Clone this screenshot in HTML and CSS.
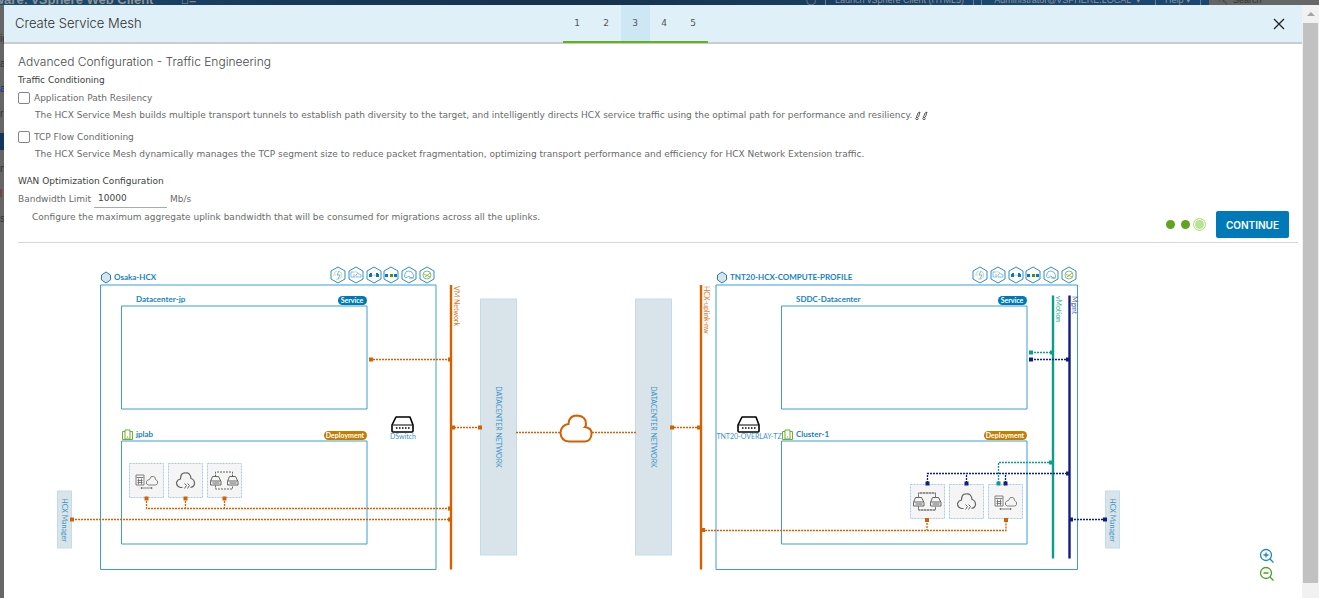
FILE: index.html
```html
<!DOCTYPE html>
<html lang="en">
<head>
<meta charset="utf-8">
<meta name="viewport" content="width=device-width, initial-scale=1">
<title>Create Service Mesh</title>
<link rel="stylesheet" href="styles.css">
</head>
<body>
<div class="backdrop" aria-hidden="true">
  <div class="topbar">
    <span class="brand">ware: vSphere Web Client</span>
    <span class="home">⌂≡</span>
    <span class="tool first">◯</span>
    <span class="tool">Launch vSphere Client (HTML5)</span>
    <span class="tool gap">Administrator@VSPHERE.LOCAL &nbsp;▾</span>
    <span class="tool">Help ▾</span>
    <span class="search">🔍︎ &nbsp;Search</span>
  </div>
  <div class="side"><i></i><span>ig</span><span>a</span><span class="dark">a</span><span>r</span><b></b><span>n</span><span class="red">l</span><span>s</span></div>
</div>

<div class="dialog" role="dialog" aria-labelledby="title">
  <div class="panel">
    <header class="head">
      <h1 id="title" class="title">Create Service Mesh</h1>
      <nav class="steps" aria-label="Steps">
        <button type="button">1</button>
        <button type="button">2</button>
        <button type="button" class="current" aria-current="step">3</button>
        <button type="button">4</button>
        <button type="button">5</button>
      </nav>
      <span class="fill"></span>
      <button type="button" class="close" aria-label="Close">
        <svg width="12" height="12" viewBox="0 0 12 12"><path d="M1 1l10 10M11 1L1 11" stroke="#222" stroke-width="1.3" fill="none"/></svg>
      </button>
    </header>

    <form class="form">
      <h2 class="heading">Advanced Configuration - Traffic Engineering</h2>
      <h3 class="sub">Traffic Conditioning</h3>
      <div class="option">
        <label class="check"><input type="checkbox">Application Path Resilency</label>
        <p class="note">The HCX Service Mesh builds multiple transport tunnels to establish path diversity to the target, and intelligently directs HCX service traffic using the optimal path for performance and resiliency.
          <svg class="paths" width="14" height="10" viewBox="0 0 14 10"><g fill="none" stroke="#333" stroke-width=".8"><path d="M1.500 6L3 2L5 1L3.500 6"/><circle cx="2" cy="7.500" r="1.200"/><path d="M8.500 6L10 2L12 1L10.500 6"/><circle cx="9" cy="7.500" r="1.200"/></g></svg></p>
      </div>
      <div class="option">
        <label class="check"><input type="checkbox">TCP Flow Conditioning</label>
        <p class="note">The HCX Service Mesh dynamically manages the TCP segment size to reduce packet fragmentation, optimizing transport performance and efficiency for HCX Network Extension traffic.</p>
      </div>
      <div class="wan">
        <div class="wan-fields">
          <h3 class="sub">WAN Optimization Configuration</h3>
          <div class="limit"><label for="bw">Bandwidth Limit</label><input id="bw" type="text" value="10000"><span>Mb/s</span></div>
          <p class="note wide">Configure the maximum aggregate uplink bandwidth that will be consumed for migrations across all the uplinks.</p>
        </div>
        <div class="actions">
          <span class="dot"></span><span class="dot"></span><span class="dot now"></span>
          <button type="submit" class="primary">CONTINUE</button>
        </div>
      </div>
    </form>

    <div class="canvas">
      <svg class="diagram" viewBox="4 243 1298 355" role="img" aria-label="Service mesh topology">
        <defs>
          <path id="hex" d="M0-8L7-4V4L0 8L-7 4V-4Z"/>
          <g id="services" fill="none" stroke-width="1">
            <g stroke="#2b8fc9" fill="#fff">
              <use href="#hex" x="0"/><use href="#hex" x="18"/><use href="#hex" x="36"/><use href="#hex" x="53"/><use href="#hex" x="71"/><use href="#hex" x="89"/>
            </g>
            <g stroke-width=".7">
              <path d="M-1-4A4 4 0 0 0-4-1M1-4A4 4 0 1 1-2 4M-5 0H-2" stroke="#a5cf70"/><path d="M1-4L-1 0H2L0 4" stroke="#3a9bd0"/>
              <path d="M17 2H13V-3H16M16-1V2M18 2H23Q24-1 21-1Q20-3 18 0Z" stroke="#5aaad6"/><path d="M16-3Q18-4 20-2" stroke="#a5cf70"/>
              <path d="M33 1Q36-1 39 1" stroke="#a5cf70"/>
              <path d="M68 3Q65 2 67-1Q67-4 71-4Q75-3 75-1Q77 3 73 3L71 1Z" stroke="#3a9bd0"/><path d="M71 3H76" stroke="#62a420"/>
              <circle cx="89" r="4" stroke="#62a420"/><path d="M86-1Q89 2 92-2M87 2Q89-1 92 2" stroke="#62a420"/>
            </g>
            <path d="M31-1h3v3h-3zM32-2h2v2h-2zM38-1h3v3h-3zM38-2h2v2h-2zM47-1h3v3h-3zM56-1h3v3h-3z" fill="#0a78b8"/><path d="M52-1h3v3h-3z" fill="#48960c"/>
          </g>
          <g id="switch" fill="none" stroke="#000">
            <path d="M4 1H18L21 9V15Q21 16 20 16H1Q0 16 0 15V9Z" stroke-width="1.600" stroke-linejoin="round"/>
            <path d="M1 9H20"/><path d="M4 12H18" stroke-width="1.600" stroke-dasharray="1.500 1.500"/>
          </g>
          <g id="host" fill="#fff" stroke="#72ad32">
            <path d="M.500 2.500H10.500V10.500H.500Z"/><path d="M3 1H8V10H3Z"/><path d="M5 8h1" stroke-width="1.200"/>
          </g>
          <rect id="tile" width="34" height="34" fill="#f5f5f5" stroke="#a9c9e8" stroke-dasharray="2 1"/>
          <g id="t-link">
            <use href="#tile"/>
            <g fill="none" stroke="#666" stroke-width=".8"><path d="M6.500 11.500h8v10h-8zM7 14h7M8 17h5M8 19h5M9 15v6M12 15v6"/><path d="M19 21.500Q16 21 17 18Q18 16 20 16Q21 12 24 13Q26 13 26 16Q29 17 28 20Q28 21 26 21.500Z"/><path d="M11 24.500H23M12 23.500v2M22 23.500v2"/></g>
          </g>
          <g id="t-cloud">
            <use href="#tile"/>
            <path d="M14 24H12Q8 23 8 19Q9 16 12 15.500Q12 9 17 9.500Q22 9 22.500 15Q26 16 26 20Q26 23 22 24" fill="none" stroke="#666" stroke-width="1.200"/>
            <path d="M16 20l2 2-2 3M19 20l2 2-2 3" fill="none" stroke="#666"/>
          </g>
          <g id="t-pair">
            <use href="#tile"/>
            <g fill="none" stroke="#555" stroke-width=".9">
              <path d="M8 13V8.500H25V13M8 22V25.500H25V22" stroke-dasharray="2 1"/>
              <path d="M5 13H11L13.500 18V21.500H3V18ZM3 17.500H13M5 19.500H12M22 13H28L30.500 18V21.500H20V18ZM20 17.500H30M22 19.500H29"/>
            </g>
          </g>
          <g id="t-pair-solid">
            <use href="#t-pair"/>
            <path d="M8 13V8.500H25V13M8 22V25.500H25V22" fill="none" stroke="#777" stroke-width=".8"/>
          </g>
        </defs>

        <g class="zone">
          <path d="M100.500 285H436V569.500H100.500ZM121.500 306H367V409H121.500ZM121.500 441H367V544H121.500Z"/>
          <path d="M716 285H1077.500V569.500H716ZM781.500 306H1027V409H781.500ZM781.500 441H1027V544H781.500Z"/>
        </g>
        <g class="block">
          <rect x="480.500" y="299" width="36" height="256"/><rect x="635.500" y="299" width="36" height="256"/>
          <rect x="57.500" y="491" width="14" height="57"/><rect x="1105.500" y="491" width="14" height="57"/>
        </g>

        <g class="profile">
          <path d="M106 272L110.500 275V280L106 283L101.500 280V275ZM722 272L726.500 275V280L722 283L717.500 280V275Z"/>
        </g>
        <g class="name">
          <text x="114" y="280">Osaka-HCX</text><text x="136" y="302">Datacenter-jp</text><text x="136" y="437">jplab</text>
          <text x="730" y="280">TNT20-HCX-COMPUTE-PROFILE</text><text x="796" y="302">SDDC-Datacenter</text><text x="796" y="437">Cluster-1</text>
        </g>
        <use href="#services" x="338" y="275"/><use href="#services" x="980" y="275"/>
        <use href="#host" x="122" y="429"/><use href="#host" x="782" y="429"/>
        <use href="#switch" x="392" y="416"/><use href="#switch" x="738" y="416"/>
        <g class="caption"><text x="403" y="439">DSwitch</text><text x="749" y="439">TNT20-OVERLAY-TZ</text></g>

        <g class="badge">
          <rect x="338" y="296" width="29" height="9" rx="4.500" fill="#0079b8"/><text x="352" y="303">Service</text>
          <rect x="998" y="296" width="29" height="9" rx="4.500" fill="#0079b8"/><text x="1012" y="303">Service</text>
          <rect x="324" y="431" width="43" height="9" rx="4.500" fill="#c47d00"/><text x="345" y="438">Deployment</text>
          <rect x="984" y="431" width="43" height="9" rx="4.500" fill="#c47d00"/><text x="1005" y="438">Deployment</text>
        </g>

        <use href="#t-link" x="129.500" y="463.500"/><use href="#t-cloud" x="168.500" y="463.500"/><use href="#t-pair" x="207.500" y="463.500"/>
        <use href="#t-pair-solid" x="910.500" y="484.500"/><use href="#t-cloud" x="949.500" y="484.500"/><use href="#t-link" x="988.500" y="484.500"/>

        <g class="net orange">
          <path class="bus" d="M451 285V569.500M701 285V569.500"/>
          <path class="wire" d="M370 359.500H450M451 427.500H480M516 432.500H560M592 432.500H636M671 427.500H700M72 519.500H450M146.500 498V508.500H450M185.500 498V508.500H450M224.500 498V508.500M702 530.500H1006V520M927 520V530"/>
          <path class="pin" d="M369 357.500h4v4h-4zM448 357.500h4v4h-4zM451 425.500h4v4h-4zM478 425.500h4v4h-4zM670 425.500h4v4h-4zM697 425.500h4v4h-4zM70 517.500h4v4h-4zM448 517.500h4v4h-4zM448 506.500h4v4h-4zM144.500 496.500h4v4h-4zM183.500 496.500h4v4h-4zM222.500 496.500h4v4h-4zM701 528h4v4h-4zM925 518h4v4h-4zM1004 518h4v4h-4z"/>
          <path class="cloud" d="M569 441.500Q561 441 560.500 433Q561 425 568.500 424Q569 415.500 577 415.500Q586 416 586 424Q586 426 585 427Q592 428 591.500 434Q591 441 585 441.500Z"/>
        </g>
        <g class="net teal">
          <path class="bus" d="M1053 295.500V558.500"/>
          <path class="wire" d="M1031 352.500H1051M998.500 483V462.500H1051"/>
          <path class="pin" d="M1029 350.500h4v4h-4zM1050 350.500h4v4h-4zM1049 460.500h4v4h-4zM996.500 481.500h4v4h-4z"/>
        </g>
        <g class="net navy">
          <path class="bus" d="M1069.500 295.500V558.500"/>
          <path class="wire" d="M1031 359.500H1068M927.500 483V473.500H1068M966.500 483V473M1005.500 483V473M1071 519.500H1105"/>
          <path class="pin" d="M1029 357.500h4v4h-4zM1066 357.500h4v4h-4zM1066 471.500h4v4h-4zM925.500 481.500h4v4h-4zM964.500 481.500h4v4h-4zM1003.500 481.500h4v4h-4zM1069 517.500h4v4h-4zM1103 517.500h4v4h-4z"/>
        </g>

        <g class="vertical">
          <text transform="translate(454 286) rotate(90)" fill="#d9772b">VM Network</text>
          <text transform="translate(704 286) rotate(90)" fill="#d9772b">HCX-uplink-nw</text>
          <text transform="translate(1056 296) rotate(90)" fill="#2aa999">vMotion</text>
          <text transform="translate(1072 296) rotate(90)" fill="#4d57a8">Mgmt</text>
          <text class="mid" transform="translate(496 427) rotate(90)">DATACENTER NETWORK</text>
          <text class="mid" transform="translate(651 427) rotate(90)">DATACENTER NETWORK</text>
          <text class="mid" transform="translate(62 520) rotate(90)">HCX Manager</text>
          <text class="mid" transform="translate(1110 520) rotate(90)">HCX Manager</text>
        </g>
      </svg>
      <div class="zoom">
        <button type="button" aria-label="Zoom in"><svg width="16" height="16" viewBox="0 0 16 16" fill="none" stroke="#1a86c2" stroke-width="1.300"><circle cx="7" cy="7" r="5.500"/><path d="M11 11l3.500 3.500M4.500 7h5M7 4.500v5"/></svg></button>
        <button type="button" aria-label="Zoom out"><svg width="16" height="16" viewBox="0 0 16 16" fill="none" stroke="#4f9f22" stroke-width="1.300"><circle cx="7" cy="7" r="5.500"/><path d="M11 11l3.500 3.500M4.500 7h5"/></svg></button>
      </div>
    </div>
  </div>
  <div class="scrollbar" aria-hidden="true"><span class="arrow"></span><span class="thumb"></span></div>
</div>
</body>
</html>
```
FILE: styles.css
```css
* { box-sizing: border-box; }
html, body { height: 100%; }
body {
  margin: 0;
  overflow: hidden;
  background: #666;
  font-family: Lato, Inter, sans-serif;
  font-size: 10px;
  color: #565656;
}
h1, h2, h3, p { margin: 0; font-weight: 400; }
button { font: inherit; color: inherit; border: 0; padding: 0; background: none; }

/* Dimmed application behind the dialog */
.backdrop { position: absolute; inset: 0; overflow: hidden; font-family: "Liberation Sans", Arial, sans-serif; }
.topbar {
  position: absolute; left: 0; right: 0; top: -13px; height: 18px;
  display: flex; align-items: flex-end;
  background: linear-gradient(90deg, #1c4c6e 0, #163a5c 20%, #16324d 45%, #1a4770 75%);
  color: #8d9399; white-space: nowrap;
}
.topbar span { line-height: 10px; }
.topbar .brand { width: 181px; font-size: 13px; font-weight: 700; text-indent: -6px; }
.topbar .home { font-size: 13px; }
.topbar .tool { font-size: 9px; padding: 0 9px; border-right: 1px solid #6b7f91; }
.topbar .first { margin-left: auto; }
.topbar .gap { margin-left: 7px; border-left: 1px solid #6b7f91; padding: 0 14px 0 12px; }
.topbar .search { width: 110px; margin-left: 8px; padding-left: 8px; font-size: 9px; background: #666; color: #333; line-height: 10px; padding-top: 11px; }
.side { position: absolute; top: 20px; left: 0; width: 4px; overflow: hidden; display: grid; gap: 13px; font-size: 10px; line-height: 12px; color: #333; }
.side b { height: 17px; background: #12365f; }
.side .dark { color: #0b2f7a; }
.side .red { color: #722; }

.dialog { position: absolute; inset: 5px 0 0 4px; display: flex; }
.panel { flex: 1; min-width: 0; background: #fff; display: flex; flex-direction: column; }

.head {
  flex: none;
  display: flex; align-items: center;
  height: 39px; padding: 0 11px;
  background: #dff0f8; border-bottom: 2px solid #ccc;
}
.title { flex: 1; font-family: Inter, sans-serif; font-size: 13px; line-height: 18px; padding-bottom: 2px; color: #313131; font-weight: 300; }
.steps { align-self: stretch; display: flex; margin-bottom: -1px; border-bottom: 2px solid #60b515; z-index: 1; }
.steps button { width: 29px; font: 9px "DejaVu Sans", sans-serif; }
.steps .current { background: #cde7f4; }
.fill { flex: 1; }
.close { width: 24px; height: 24px; margin-left: 12px; display: grid; place-items: center; }

.form { flex: none; padding: 8px 4px 0 14px; font-family: "DejaVu Sans", sans-serif; font-size: 9px; color: #6a6a6a; }
.heading { font-family: Inter, sans-serif; font-size: 12px; line-height: 20px; font-weight: 300; color: #484848; }
.sub { font-size: 9px; line-height: 16px; color: #404040; }
.option { margin-bottom: 5px; }
.check { display: flex; align-items: center; gap: 4px; height: 20px; }
.check input {
  appearance: none; margin: 0; width: 12px; height: 12px;
  border: 1px solid #858585; border-radius: 2px; background: #fff;
}
.note { padding-left: 17px; line-height: 14px; }
.paths { vertical-align: middle; }
.note.wide { padding-left: 14px; line-height: 18px; }
.wan { display: flex; justify-content: space-between; margin-top: 12px; padding-bottom: 4px; border-bottom: 1px solid #d8d8d8; }
.wan-fields { padding-bottom: 12px; }
.limit { display: flex; align-items: center; gap: 3px; height: 19px; }
.limit input {
  width: 73px; height: 19px; padding: 0 4px; border: 0; border-bottom: 1px solid #aaa;
  font: inherit; color: #444; background: none;
}
.actions { display: flex; align-items: center; align-self: flex-end; padding-right: 9px; }
.dot { width: 9px; height: 9px; margin-right: 6px; border-radius: 50%; background: #62a420; }
.dot.now { width: 13px; height: 13px; margin: 0 10px 0 -3px; border: 1px solid #b5e58d; background: #b5e58d; box-shadow: inset 0 0 0 1px #fff; }
.primary { height: 27px; padding: 0 10px; border-radius: 2px; background: #0079b8; color: #fff; font-family: Inter, sans-serif; font-size: 10px; font-weight: 600; }

.canvas { position: relative; flex: 1; }
.diagram { display: block; width: 100%; height: auto; }
.zoom { position: absolute; right: 27px; bottom: 16px; display: grid; gap: 2px; }
.zoom button { width: 16px; height: 16px; }
.zoom svg { display: block; }

.zone { fill: none; stroke: #3b9fd3; }
.block { fill: #d9e4ea; stroke: #bfdeec; }
.profile { fill: #d9e4ea; stroke: #1f83ba; }
.name { font-size: 8px; font-weight: 700; fill: #1583bd; }
.caption { font-size: 7px; fill: #3b95c9; text-anchor: middle; }
.badge text { font-size: 7px; font-weight: 700; fill: #fff; text-anchor: middle; }
.vertical { font-size: 7px; fill: #3b95c9; }
.mid { text-anchor: middle; }
.orange { --line: #d66000; }
.teal { --line: #0d9d8a; }
.navy { --line: #101e82; }
.bus { fill: none; stroke: var(--line); stroke-width: 2.400; }
.wire { fill: none; stroke: var(--line); stroke-width: 1.300; stroke-dasharray: 2 1; }
.pin { fill: var(--line); }
.cloud { fill: #fff; stroke: var(--line); stroke-width: 2; }

.scrollbar { width: 17px; background: #f1f1f1; display: flex; flex-direction: column; align-items: center; padding-bottom: 15px; }
.arrow { width: 0; height: 0; margin: 7px 0 7px; border: 4px solid transparent; border-top-width: 0; border-bottom-color: #a3a3a3; }
.thumb { flex: 1; width: 15px; background: #c1c1c1; }
```
